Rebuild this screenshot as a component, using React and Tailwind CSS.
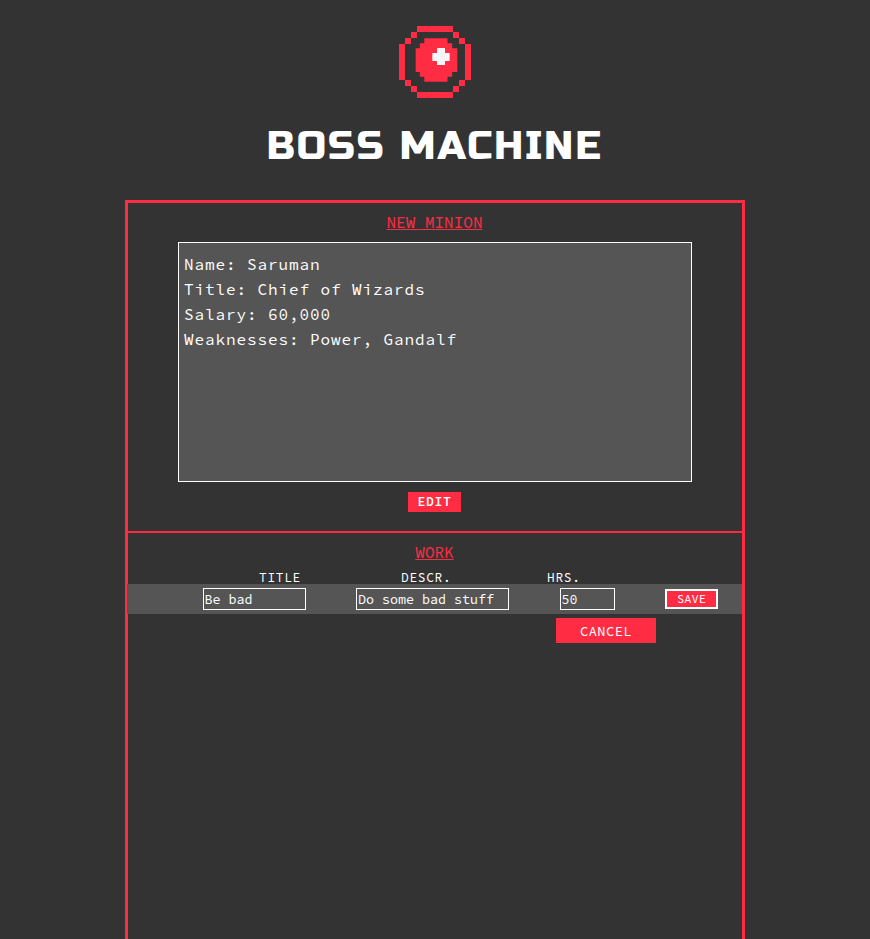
function Logo() {
  return (
    <svg className="mx-auto block" width="72" height="72" viewBox="0 0 216 216" shapeRendering="crispEdges">
      <path
        fill="#ff2c44"
        d="M54 0h108v18H54zM36 18h18v18H36zM162 18h18v18h-18zM18 36h18v18H18zM180 36h18v18h-18zM0 54h18v108H0zM198 54h18v108h-18zM18 162h18v18H18zM180 162h18v18h-18zM36 180h18v18H36zM162 180h18v18h-18zM54 198h108v18H54z"
      />
      <g shapeRendering="auto">
        <path fill="#ff2c44" d="M76 37h69.5v14.5h14v15h15.5v71.5h-15.500v14.5h-14v14.5H76v-14.5H62.500v-14.5H50V66.500h12.500V51.500h13.500z" />
        <path fill="#f7f7f7" d="M114 66h24v15h14v24h-14v12h-24v-12h-14V81h14z" />
      </g>
    </svg>
  );
}

function SectionTitle({ children }) {
  return (
    <h2 className="mr-px text-center text-[16px] leading-[20px] text-[#ff2c44] underline">
      {children}
    </h2>
  );
}

const DETAILS = ["Name: Saruman", "Title: Chief of Wizards", "Salary: 60,000", "Weaknesses: Power, Gandalf"];

export default function App() {
  return (
    <div className="h-[939px] overflow-hidden bg-[#333] pt-[26px] font-['Source_Code_Pro','Noto_Sans_Mono_CJK_SC','DejaVu_Sans_Mono',monospace] text-white">
      <Logo />
      <h1 className="mt-[23px] mr-px h-[50px] text-center font-['Russo_One','DejaVu_Sans',sans-serif] text-[40px] leading-[50px] font-normal tracking-[2px]">
        BOSS MACHINE
      </h1>
      <main className="mx-auto mt-[29px] h-[760px] w-[620px] border-[3px] border-[#ff2c44]">
        <section className="flex h-[330px] flex-col items-center border-b-2 border-[#ff2c44] pt-[9px]">
          <SectionTitle>NEW MINION</SectionTitle>
          <div className="mt-[10px] h-[240px] w-[514px] border border-white bg-[#555] px-[5px] pt-[9px] text-[16px] leading-[25px] tracking-[0.9px]">
            {DETAILS.map((line) => (
              <p key={line}>{line}</p>
            ))}
          </div>
          <button className="mt-[10px] mr-px h-[20px] w-[53px] bg-[#ff2c44] text-[13px] leading-[20px] font-semibold tracking-[0.7px]">
            EDIT
          </button>
        </section>
        <section className="pt-[9px]">
          <SectionTitle>WORK</SectionTitle>
          <div className="mt-[6px] flex h-[16px] text-[12.8px] leading-[19px] tracking-[0.7px]">
            <span className="ml-[131px] w-[142px]">TITLE</span>
            <span className="w-[146px]">DESCR.</span>
            <span>HRS.</span>
          </div>
          <form className="-ml-px flex h-[30px] items-center bg-[#555] pl-[76px] text-[13.333px]">
            <input className="h-[22px] w-[103px] border border-white pl-[0.5px]" defaultValue="Be bad" />
            <input className="ml-[50px] h-[22px] w-[153px] border border-white px-px" defaultValue="Do some bad stuff" />
            <input className="ml-[51px] h-[22px] w-[55px] border border-white pl-[0.5px]" defaultValue="50" />
            <button type="button" className="ml-[50px] h-[20px] w-[53px] border-2 border-white bg-[#ff2c44] text-[12px] leading-[16px]">
              SAVE
            </button>
          </form>
          <button className="mt-[4px] ml-[428px] block h-[25px] w-[100px] bg-[#ff2c44] text-[13.6px] leading-[27px] tracking-[0.5px]">
            CANCEL
          </button>
        </section>
      </main>
    </div>
  );
}
